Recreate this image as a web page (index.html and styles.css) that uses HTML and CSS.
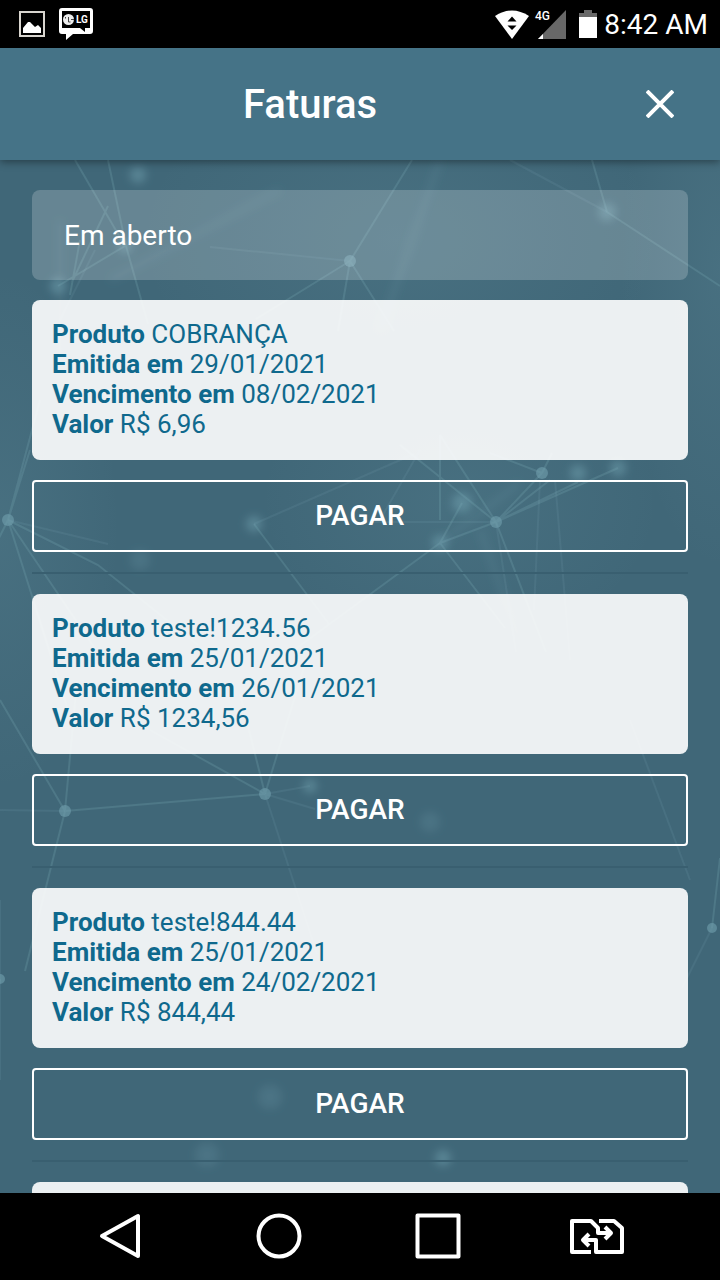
FILE: index.html
```html
<!DOCTYPE html>
<html lang="pt-BR">
<head>
  <meta charset="UTF-8" />
  <meta name="viewport" content="width=device-width, initial-scale=1.0" />
  <title>Faturas</title>
  <link rel="stylesheet" href="styles.css">
</head>
<body>
  <div class="statusbar">
    <div class="status-left">
      <svg width="26" height="26" viewBox="0 0 26 26">
        <rect x="1" y="1" width="24" height="24" fill="none" stroke="#d8d5cf" stroke-width="2" />
        <path d="M4 22v-5l5-6h2l5 5 3-2 3 3v5z" fill="#fff" />
      </svg>
      <svg width="34" height="32" viewBox="0 0 34 32">
        <path d="M3 0h28q3 0 3 3v20q0 3-3 3H14l-7 6v-6H3q-3 0-3-3V3q0-3 3-3z" fill="#fff" />
        <path d="M3 3h28v17h-5v4l-5-4H3z" fill="#000" />
        <circle cx="9.500" cy="11.500" r="5.500" fill="#eee" />
        <path d="M9.500 9v5h2M12 11.500h3M6.500 9v1.500" fill="none" stroke="#444" stroke-width="1" />
        <text class="lg-text" x="17" y="15">LG</text>
      </svg>
    </div>
    <div class="status-right">
      <svg width="34" height="29" viewBox="0 0 34 29">
        <path d="M0 6Q17-5 34 6L17 29z" fill="#fff" />
        <path d="M12.500 11.500L17 6.500l4.500 5zM12.500 15.500h9L17 20z" fill="#000" />
      </svg>
      <svg class="signal" width="31" height="29" viewBox="0 0 31 29">
        <path d="M31 0v29H3z" fill="#686868" />
        <path d="M8 24v5H3z" fill="#fff" />
        <text class="net-text" x="0" y="10">4G</text>
      </svg>
      <svg class="battery" width="18" height="28" viewBox="0 0 18 28">
        <path d="M5 0h8v3h5v5H0V3h5z" fill="#686868" />
        <path d="M0 7h18v21H0z" fill="#fff" />
      </svg>
      <span class="clock">8:42 AM</span>
    </div>
  </div>

  <header class="header">
    <h1>Faturas</h1>
    <button class="close" aria-label="Fechar">
      <svg width="28" height="28" viewBox="0 0 28 28">
        <path d="M1 1l26 26M27 1L1 27" stroke="#fff" stroke-width="4" />
      </svg>
    </button>
  </header>

  <main class="content">
    <!-- rede de pontos do fundo -->
    <svg class="network" viewBox="0 0 720 1033" preserveAspectRatio="xMidYMin slice" aria-hidden="true">
      <defs>
        <radialGradient id="glow">
          <stop offset="0" stop-color="#8fc0cc" stop-opacity=".1" />
          <stop offset="1" stop-color="#8fc0cc" stop-opacity="0" />
        </radialGradient>
        <filter id="line" x="-5%" y="-5%" width="110%" height="110%">
          <feGaussianBlur stdDeviation="0.7" />
        </filter>
        <filter id="soft" x="-100%" y="-100%" width="300%" height="300%">
          <feGaussianBlur stdDeviation="4" />
        </filter>
      </defs>
      <ellipse cx="0" cy="370" rx="120" ry="260" fill="url(#glow)" />
      <ellipse cx="400" cy="80" rx="260" ry="180" fill="url(#glow)" />
      <ellipse cx="720" cy="110" rx="100" ry="300" fill="url(#glow)" />
      <ellipse cx="460" cy="340" rx="200" ry="150" fill="url(#glow)" />
      <g stroke="#80b0bc" stroke-opacity=".22" stroke-width="2" fill="none" filter="url(#line)">
        <path d="M75 0l50 86M108 0l18 86 22 78M125 86L58 126M80 80l-10 55M72 122l36-76" />
        <path d="M412 0l-62 101M350 101l-94 58M350 101l44 70M350 101l-12 70M592 0l15 52M607 52l113 74" />
        <path d="M8 360L40 240M8 360L30 290M8 360l60 190M8 360l88 130M8 360l90 45 100 80M8 360l-20 40" />
        <path d="M400 285l96 77M440 275l56 87M456 300l40 62M542 313l-46 49M550 320l-54 42M578 322l-82 40M618 308l-122 54M496 362l-56 21M496 362l50 130M440 383l-150 110M440 383l65 85M542 313l-52-20M542 313l10-20M440 275v85M440 383l22-40M254 364l75 100" />
        <path d="M65 651L0 540M65 651l12-130M65 651l-40 160M65 651l200-17M265 634L150 570M265 634l-25-100M265 634l40-130" />
        <path d="M712 768l8-70M0 819l-10 60" />
      </g>
      <g stroke="#80b0bc" stroke-opacity=".12" stroke-width="2" fill="none" filter="url(#line)">
        <path d="M210 87l140 14M510 0l97 52M420 290l-40 70M496 362H370M496 362l20 130M555 320l15 180M540 320l-6 130M8 360l100 24M265 634l52 160M265 634l45-8M265 634l50 15M65 651L0 650M95 90L60 160M254 364l160-70M0 920V740M712 768l-30 60M630 560l60 160" />
      </g>
      <g stroke="#80b0bc" stroke-opacity=".12" stroke-width="6" fill="none" filter="url(#soft)">
        <path d="M60 60v140M110 120l170-90M480 370l40 110M440 383l80-60M380 171L440 0" />
      </g>
      <g fill="#6f9fae" fill-opacity=".6" filter="url(#line)">
        <circle cx="350" cy="101" r="6" />
        <circle cx="8" cy="360" r="6" />
        <circle cx="496" cy="362" r="6" />
        <circle cx="542" cy="313" r="6" />
        <circle cx="65" cy="651" r="6" />
        <circle cx="265" cy="634" r="6" />
        <circle cx="712" cy="768" r="5" />
        <circle cx="0" cy="819" r="5" />
      </g>
      <g fill="#78a8b6" fill-opacity=".45" filter="url(#soft)">
        <circle cx="138" cy="15" r="8" />
        <circle cx="607" cy="52" r="9" />
        <circle cx="58" cy="126" r="8" />
        <circle cx="125" cy="86" r="7" />
        <circle cx="254" cy="364" r="8" />
        <circle cx="462" cy="343" r="10" />
        <circle cx="440" cy="383" r="8" />
        <circle cx="578" cy="313" r="8" />
        <circle cx="618" cy="308" r="8" />
        <circle cx="310" cy="626" r="7" />
        <circle cx="443" cy="998" r="8" />
      </g>
      <g fill="#78a8b6" fill-opacity=".18" filter="url(#soft)">
        <circle cx="430" cy="662" r="10" />
        <circle cx="270" cy="937" r="12" />
        <circle cx="207" cy="995" r="12" />
        <circle cx="140" cy="400" r="10" />
      </g>
    </svg>

    <h2 class="filter">Em aberto</h2>

    <ul class="invoices">
      <li class="invoice">
        <div class="card">
          <p><strong>Produto</strong> COBRANÇA</p>
          <p><strong>Emitida em</strong> 29/01/2021</p>
          <p><strong>Vencimento em</strong> 08/02/2021</p>
          <p><strong>Valor</strong> R$ 6,96</p>
        </div>
        <button class="pay">PAGAR</button>
      </li>
      <li class="invoice">
        <div class="card">
          <p><strong>Produto</strong> teste!1234.56</p>
          <p><strong>Emitida em</strong> 25/01/2021</p>
          <p><strong>Vencimento em</strong> 26/01/2021</p>
          <p><strong>Valor</strong> R$ 1234,56</p>
        </div>
        <button class="pay">PAGAR</button>
      </li>
      <li class="invoice">
        <div class="card">
          <p><strong>Produto</strong> teste!844.44</p>
          <p><strong>Emitida em</strong> 25/01/2021</p>
          <p><strong>Vencimento em</strong> 24/02/2021</p>
          <p><strong>Valor</strong> R$ 844,44</p>
        </div>
        <button class="pay">PAGAR</button>
      </li>
      <li class="invoice">
        <div class="card"></div>
      </li>
    </ul>
  </main>

  <nav class="navbar">
    <button aria-label="Voltar">
      <svg width="46" height="46" viewBox="0 0 46 46">
        <path d="M5 23L41 3v40z" />
      </svg>
    </button>
    <button aria-label="Início">
      <svg width="46" height="46" viewBox="0 0 46 46">
        <circle cx="23" cy="23" r="20.500" />
      </svg>
    </button>
    <button aria-label="Recentes">
      <svg width="46" height="46" viewBox="0 0 46 46">
        <rect x="2.500" y="2.500" width="41" height="41" />
      </svg>
    </button>
    <button aria-label="Trocar chip">
      <svg width="56" height="46" viewBox="0 0 56 46">
        <path d="M22 39H3V8h19l7 7v5h12M30 8h15l8 7v24H27V27H14" />
        <path d="M36 14l6 6-6 6M20 21l-6 6 6 6" />
      </svg>
    </button>
  </nav>
</body>
</html>
```

FILE: styles.css
```css
* {
  box-sizing: border-box;
}
body {
  margin: 0;
  height: 100vh;
  display: flex;
  flex-direction: column;
  overflow: hidden;
  background-color: #406778;
  font-family: Roboto, "Liberation Sans", sans-serif;
  color: #fff;
}
h1, h2, p, ul {
  margin: 0;
  padding: 0;
}
button {
  font-family: inherit;
  color: inherit;
  background: none;
  border: none;
  padding: 0;
  cursor: pointer;
}
svg {
  display: block;
}

.statusbar {
  display: flex;
  justify-content: space-between;
  align-items: center;
  height: 48px;
  flex-shrink: 0;
  padding: 0 12px 0 19px;
  background: #000;
}
.status-left {
  display: flex;
  align-items: center;
  gap: 14px;
}
.status-right {
  display: flex;
  align-items: center;
}
.signal {
  margin-left: 6px;
  overflow: visible;
}
.battery {
  margin: 0 7px 0 13px;
}
.clock {
  padding-top: 2px;
  font-size: 28px;
  line-height: 46px;
}
.lg-text {
  font-size: 10px;
  font-weight: bold;
  fill: #fff;
}
.net-text {
  font-size: 12px;
  font-weight: 500;
  fill: #fff;
}

.header {
  display: grid;
  grid-template-columns: 1fr 100px;
  align-items: center;
  height: 112px;
  flex-shrink: 0;
  background: #457387;
  box-shadow: 0 2px 8px rgba(0,0,0,0.4);
  z-index: 1;
}
.header h1 {
  font-size: 40px;
  font-weight: 500;
  text-align: center;
}
.close {
  width: 56px;
  height: 56px;
  margin-left: 12px;
  display: flex;
  align-items: center;
  justify-content: center;
}

.content {
  flex: 1;
  min-height: 0;
  position: relative;
  isolation: isolate;
  overflow: hidden;
  padding: 30px 32px 0;
}
/* fica atrás da lista */
.network {
  position: absolute;
  inset: 0;
  width: 100%;
  height: 100%;
  z-index: -1;
}
.filter {
  padding: 31px 32px 29px;
  margin-bottom: 20px;
  border-radius: 8px;
  background: rgba(255,255,255,0.2);
  font-size: 28px;
  font-weight: 400;
  line-height: 30px;
}
.invoices {
  list-style: none;
}
.invoice {
  padding-bottom: 20px;
  margin-bottom: 20px;
  border-bottom: 2px solid #395f70;
}
.card {
  min-height: 160px;
  padding: 19px 20px 21px;
  border-radius: 8px;
  background: rgba(255,255,255,0.9);
  color: #0f698d;
  font-size: 26px;
  line-height: 30px;
}
.card strong {
  font-weight: 700;
}
.pay {
  display: block;
  width: 100%;
  height: 72px;
  margin-top: 20px;
  padding-bottom: 2px;
  border: 2px solid #fff;
  border-radius: 4px;
  font-size: 28px;
  font-weight: 500;
}

.navbar {
  display: grid;
  grid-template-columns: repeat(4, 1fr);
  align-items: center;
  height: 87px;
  flex-shrink: 0;
  padding: 0 44px 1px 40px;
  background: #000;
}
.navbar button {
  display: flex;
  justify-content: center;
}
.navbar svg {
  fill: none;
  stroke: #fff;
  stroke-width: 4;
  stroke-linejoin: round;
}
```
